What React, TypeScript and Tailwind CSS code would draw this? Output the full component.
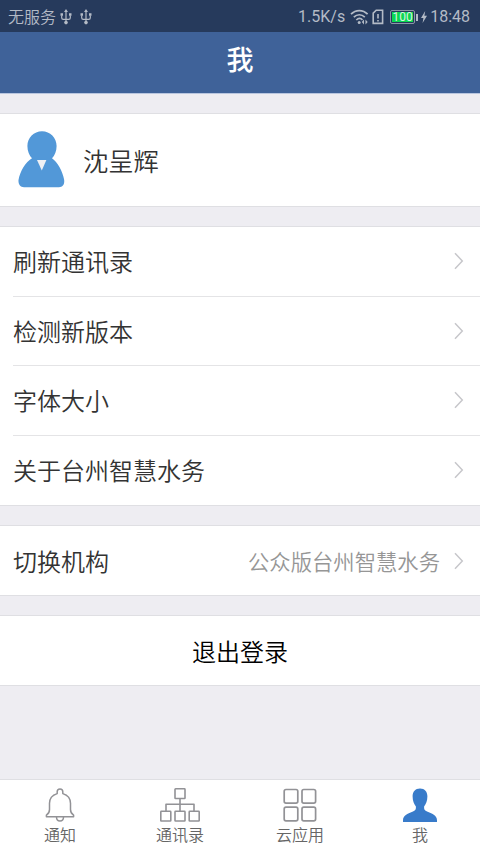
import React, { useState } from "react";

const menu = [
  { id: "refresh", label: "刷新通讯录" },
  { id: "version", label: "检测新版本" },
  { id: "font", label: "字体大小" },
  { id: "about", label: "关于台州智慧水务" },
];

function UsbIcon() {
  return (
    <svg width="12" height="16" viewBox="0 0 12 16" fill="none" stroke="currentColor" strokeWidth="1.2">
      <path d="M6 2.5V13M1.7 6.5v2.2c0 1 .6 1.6 1.6 1.6h5.4c1 0 1.6-.6 1.6-1.6V6.5" />
      <path d="M6 0l2 3H4zM.5 4.300h2.500v2.500H.5zM9 4.300h2.500v2.500H9z" fill="currentColor" stroke="none" />
      <circle cx="6" cy="13.6" r="1.8" fill="currentColor" stroke="none" />
    </svg>
  );
}

function StatusBar() {
  return (
    <div className="flex h-8 shrink-0 items-center justify-between bg-[#263a5c] pt-0.5 pr-[10px] pl-2 text-[16px] font-normal text-[#b4bbc6]">
      <div className="flex items-center">
        <span className="pb-[3px] leading-6 font-[350]">无服务</span>
        <span className="ml-1 pb-px"><UsbIcon /></span>
        <span className="ml-2 pb-px"><UsbIcon /></span>
      </div>
      <div className="flex items-center font-[Roboto,sans-serif]">
        <span className="text-[16px] leading-6">1.5K/s</span>
        <svg className="ml-[5px]" width="19" height="16" viewBox="0 0 19 16" fill="none" stroke="currentColor" strokeWidth="1.7">
          <path d="M1 5.2C5.6.3 13 .3 17.6 5.2M3.8 8.2c3.3-3.3 7.8-3.3 11 0M6.3 11c2-1.9 4.4-1.9 6.2-.2" />
          <circle cx="9.2" cy="13.4" r="1.5" fill="currentColor" stroke="none" />
          <path d="M14 10.500v5l-2.200-2.500zM15.500 10.500v5l2.200-2.500z" fill="currentColor" stroke="none" />
        </svg>
        <svg className="ml-[3px]" width="12" height="16" viewBox="0 0 12 16" fill="none" stroke="currentColor" strokeWidth="1.6">
          <path d="M4.2 1.2h6.4v13.2H1.2V4.2z" />
          <path d="M6 5v4.6M6 11v1.6" strokeWidth="1.6" />
        </svg>
        <span className="ml-[6px] flex h-[14px] w-[25px] items-center justify-center rounded-[2px] border border-[#8b96a6] p-px">
          <span className="flex h-full w-full items-center justify-center bg-[#0bd750] text-[12px] leading-none text-[#d9f3e2]">100</span>
        </span>
        <span className="ml-px h-[7px] w-[2px] bg-[#b4bbc6]" />
        <svg className="ml-[3px]" width="6" height="12" viewBox="0 0 6 12" fill="currentColor">
          <path d="M4.2 0L0 7h2.4L1.6 12 6 4.8H3.4z" />
        </svg>
        <span className="ml-[3px] text-[16px] leading-6">18:48</span>
      </div>
    </div>
  );
}

function Chevron() {
  return (
    <svg className="shrink-0" width="10" height="18" viewBox="0 0 10 18" fill="none" stroke="#c7c7cb" strokeWidth="1.5">
      <path d="M1 1.200l7.300 7.800L1 16.800" />
    </svg>
  );
}

function Avatar() {
  return (
    <svg className="shrink-0" width="48" height="57" viewBox="0 0 48 57">
      <path
        d="M24 .3C15.800 .3 9.400 6.800 9.400 15c0 5.200 1.900 9.500 4.600 12.200C7.500 31 2 40.500.6 48.500-.1 53 2.100 56.300 6 56.300h35c4 0 5.800-3.300 5.100-7.800C44.800 40.500 39.500 31 34 27.200c2.700-2.700 4.600-7 4.600-12.200C38.600 6.800 32.200.3 24 .3z"
        fill="#5298d8"
      />
      <path d="M19 29h9.400l-4.600 10.400z" fill="#eef0f4" />
    </svg>
  );
}

function BellIcon() {
  return (
    <svg width="30" height="36" viewBox="0 0 30 36" fill="none" stroke="#929296" strokeWidth="1.5" strokeLinejoin="round">
      <path d="M12.200 5.600V3.800c0-1.800 1.100-2.800 2.800-2.800s2.800 1 2.800 2.800v1.800c4.800 1.500 7.700 5.200 7.700 9.700v6.200c0 2.800 1.100 4.400 3.100 5.700v1.600H1.400v-1.600c2-1.300 3.100-2.900 3.100-5.700v-6.200c0-4.500 2.900-8.200 7.700-9.700z" />
      <path d="M11.500 29c0 2.600 1.400 4 3.500 4s3.500-1.400 3.500-4" />
    </svg>
  );
}

function OrgIcon() {
  return (
    <svg width="40" height="36" viewBox="0 0 40 36" fill="none" stroke="#929296" strokeWidth="1.6" strokeLinejoin="round">
      <rect x="15" y=".8" width="10" height="9.700" rx=".6" />
      <rect x=".8" y="23.300" width="10" height="9.700" rx=".6" />
      <rect x="15" y="23.300" width="10" height="9.700" rx=".6" />
      <rect x="29.200" y="23.300" width="10" height="9.700" rx=".6" />
      <path d="M20 10.500v12.800M6 23.300v-7.100h28v7.100" />
    </svg>
  );
}

function AppsIcon() {
  return (
    <svg width="34" height="36" viewBox="0 0 34 36" fill="none" stroke="#929296" strokeWidth="1.700">
      <rect x="1.200" y="1.500" width="13.600" height="13.600" rx="1.800" />
      <rect x="19" y="1.500" width="13.600" height="13.600" rx="1.800" />
      <rect x="1.200" y="19.200" width="13.600" height="13.600" rx="1.800" />
      <rect x="19" y="19.200" width="13.600" height="13.600" rx="1.800" />
    </svg>
  );
}

function MeIcon() {
  return (
    <svg width="34" height="36" viewBox="0 0 34 36" fill="#387bca">
      <path d="M17 .4c-4.700 0-7.400 3.100-7.400 7.900 0 4.700 1.500 7.900 3.300 10.300v1.500c0 1.800-1.200 2.800-3.500 3.700C4.500 25.800 0 27.700 0 32.200v1.700h34v-1.700c0-4.500-4.500-6.400-9.400-8.400-2.300-.9-3.500-1.900-3.500-3.700v-1.500c1.800-2.400 3.300-5.600 3.300-10.300C24.400 3.500 21.700.4 17 .4z" />
    </svg>
  );
}

const tabs = [
  { id: "notice", label: "通知", icon: <BellIcon /> },
  { id: "contacts", label: "通讯录", icon: <OrgIcon /> },
  { id: "apps", label: "云应用", icon: <AppsIcon /> },
  { id: "me", label: "我", icon: <MeIcon /> },
];

export default function App() {
  const [active, setActive] = useState("me");

  return (
    <div className="flex h-[853px] w-[480px] flex-col overflow-hidden bg-[#eeedf2] font-['Noto_Sans_CJK_SC',sans-serif] font-[350] text-[#333333]">
      <StatusBar />
      <header className="flex h-[62px] shrink-0 items-center justify-center border-b border-[#b9c6df] bg-[#3f6299] pb-[8px]">
        <h1 className="text-[27px] leading-none font-medium text-white">我</h1>
      </header>

      <main className="flex flex-1 flex-col gap-[19px] pt-[19px]">
        <section className="flex h-[94px] items-center border-y border-[#dfdfe3] bg-white pb-[2px] pl-[18px]">
          <Avatar />
          <span className="ml-[17px] pt-[3px] text-[25.3px] leading-none">沈呈辉</span>
        </section>

        <section className="flex h-[280px] flex-col border-y border-[#dfdfe3] bg-white">
          {menu.map((item, i) => (
            <button key={item.id} className="flex flex-1 flex-col pl-[13px] text-left">
              <span
                className={`flex w-full flex-1 items-center justify-between pr-[16px] ${
                  i < menu.length - 1 ? "border-b border-[#e4e4e6]" : ""
                }`}
              >
                <span className="text-[24px] leading-none">{item.label}</span>
                <Chevron />
              </span>
            </button>
          ))}
        </section>

        <button className="flex h-[71px] items-center border-y border-[#dfdfe3] bg-white pr-[16px] pl-[13px]">
          <span className="text-[24px] leading-none">切换机构</span>
          <span className="mr-[14px] ml-auto text-[21.33px] leading-none text-[#969696]">公众版台州智慧水务</span>
          <Chevron />
        </button>

        <button className="flex h-[71px] items-center justify-center border-y border-[#dfdfe3] bg-white text-[24px] leading-none text-black">
          退出登录
        </button>
      </main>

      <nav className="grid h-[74px] shrink-0 grid-cols-4 border-t border-[#dfdfe3] bg-white">
        {tabs.map((tab) => (
          <button
            key={tab.id}
            className="flex flex-col items-center pt-[8px] text-[#666666]"
            aria-current={active === tab.id}
            onClick={() => setActive(tab.id)}
          >
            {tab.icon}
            <span className="mt-[2px] text-[16px] leading-none">{tab.label}</span>
          </button>
        ))}
      </nav>
    </div>
  );
}
